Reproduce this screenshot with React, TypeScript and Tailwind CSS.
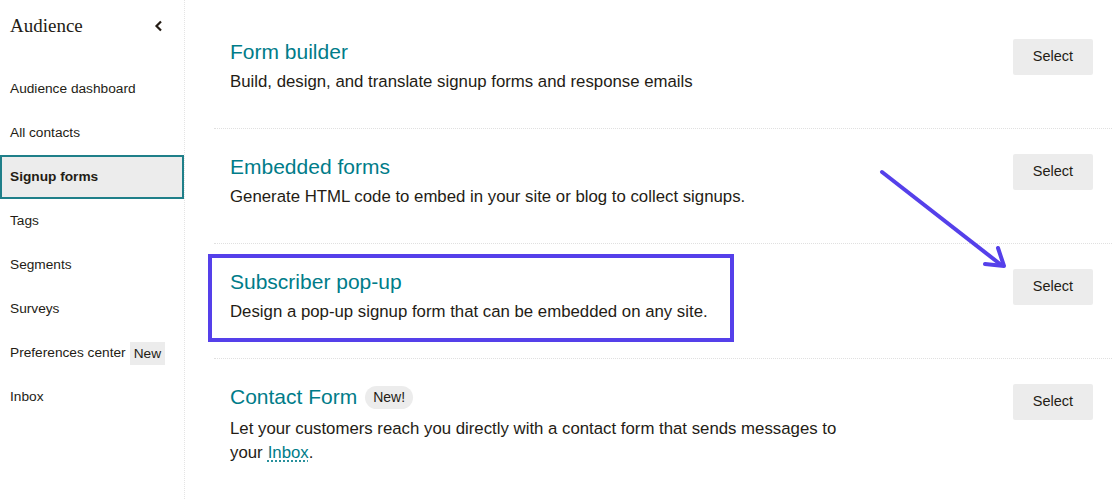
import React from "react";

const navItems = [
  "Audience dashboard",
  "All contacts",
  "Signup forms",
  "Tags",
  "Segments",
  "Surveys",
  "Preferences center",
  "Inbox",
];

function SelectButton() {
  return (
    <button className="mt-[25px] h-[36px] w-[80px] shrink-0 rounded-[2px] bg-[#ececec] text-[14.5px] font-medium text-[#241c15]">
      Select
    </button>
  );
}

export default function App() {
  return (
    <div
      className="relative flex h-[499px] w-[1112px] overflow-hidden bg-white text-[#241c15]"
      style={{ fontFamily: "'Liberation Sans', Arial, sans-serif" }}
    >
      <aside className="w-[185px] shrink-0 border-r border-dotted border-[#e4e4e4]">
        <div className="flex h-[52px] items-center justify-between pl-[10px] pr-[20px]">
          <span className="text-[19px] text-[#241c15]" style={{ fontFamily: "'Liberation Serif', Georgia, serif" }}>
            Audience
          </span>
          <svg width="10" height="12" viewBox="0 0 10 12" className="mt-[-1px]">
            <path d="M7 1.5 L2.5 6 L7 10.5" fill="none" stroke="#241c15" strokeWidth="2.2" />
          </svg>
        </div>
        <nav className="mt-[15px] flex flex-col">
          {navItems.map((item) =>
            item === "Signup forms" ? (
              <div
                key={item}
                className="flex h-[44px] w-[184px] items-center border-2 border-[#1f7f89] bg-[#ececec] pl-[8px] text-[13.7px] font-bold text-[#241c15]"
              >
                {item}
              </div>
            ) : (
              <div key={item} className="flex h-[44px] items-center pl-[10px] text-[13.7px] text-[#241c15]">
                {item}
                {item === "Preferences center" && (
                  <span className="ml-[4px] bg-[#ececec] px-[4px] py-[3px] text-[13.7px] leading-[17px]">New</span>
                )}
              </div>
            )
          )}
        </nav>
      </aside>

      <main className="flex-1 pl-[29px] pt-[14px]">
        <div className="flex h-[115px] items-start justify-between border-b border-dotted border-[#e0e0e0] pl-[16px] pr-[19px]">
          <div className="pt-[26px]">
            <div className="text-[21px] leading-[24px] text-[#007c89]">Form builder</div>
            <div className="mt-[6px] text-[16.8px] leading-[24px]">
              Build, design, and translate signup forms and response emails
            </div>
          </div>
          <SelectButton />
        </div>

        <div className="flex h-[115px] items-start justify-between border-b border-dotted border-[#e0e0e0] pl-[16px] pr-[19px]">
          <div className="pt-[26px]">
            <div className="text-[21px] leading-[24px] text-[#007c89]">Embedded forms</div>
            <div className="mt-[6px] text-[16.8px] leading-[24px]">
              Generate HTML code to embed in your site or blog to collect signups.
            </div>
          </div>
          <SelectButton />
        </div>

        <div className="relative flex h-[115px] items-start justify-between border-b border-dotted border-[#e0e0e0] pl-[16px] pr-[19px]">
          <div className="pt-[26px]">
            <div className="text-[21px] leading-[24px] text-[#007c89]">Subscriber pop-up</div>
            <div className="mt-[6px] text-[16.8px] leading-[24px]">
              Design a pop-up signup form that can be embedded on any site.
            </div>
          </div>
          <SelectButton />
          <div className="pointer-events-none absolute left-[-6px] top-[10px] h-[88px] w-[526px] border-4 border-[#5540ea]" />
        </div>

        <div className="flex h-[115px] items-start justify-between pl-[16px] pr-[19px]">
          <div className="pt-[26px]">
            <div className="flex items-center">
              <span className="text-[21px] leading-[24px] text-[#007c89]">Contact Form</span>
              <span className="ml-[8px] rounded-full bg-[#ececec] px-[8px] py-[3px] text-[14px] leading-[17px]">New!</span>
            </div>
            <div className="mt-[8px] text-[16.8px] leading-[24px]">
              <div>Let your customers reach you directly with a contact form that sends messages to</div>
              <div className="flex">
                <span>your</span>
                <span className="ml-[5px] text-[#007c89] underline decoration-dotted underline-offset-[3px]">Inbox</span>
                <span>.</span>
              </div>
            </div>
          </div>
          <SelectButton />
        </div>
      </main>

      <svg
        className="pointer-events-none absolute left-0 top-0"
        width="1112"
        height="499"
        viewBox="0 0 1112 499"
      >
        <line x1="882" y1="172" x2="1000" y2="264" stroke="#5540ea" strokeWidth="4" strokeLinecap="round" />
        <path d="M985 264 L1004 266 L998 248" fill="none" stroke="#5540ea" strokeWidth="4" strokeLinecap="round" strokeLinejoin="round" />
      </svg>
    </div>
  );
}
